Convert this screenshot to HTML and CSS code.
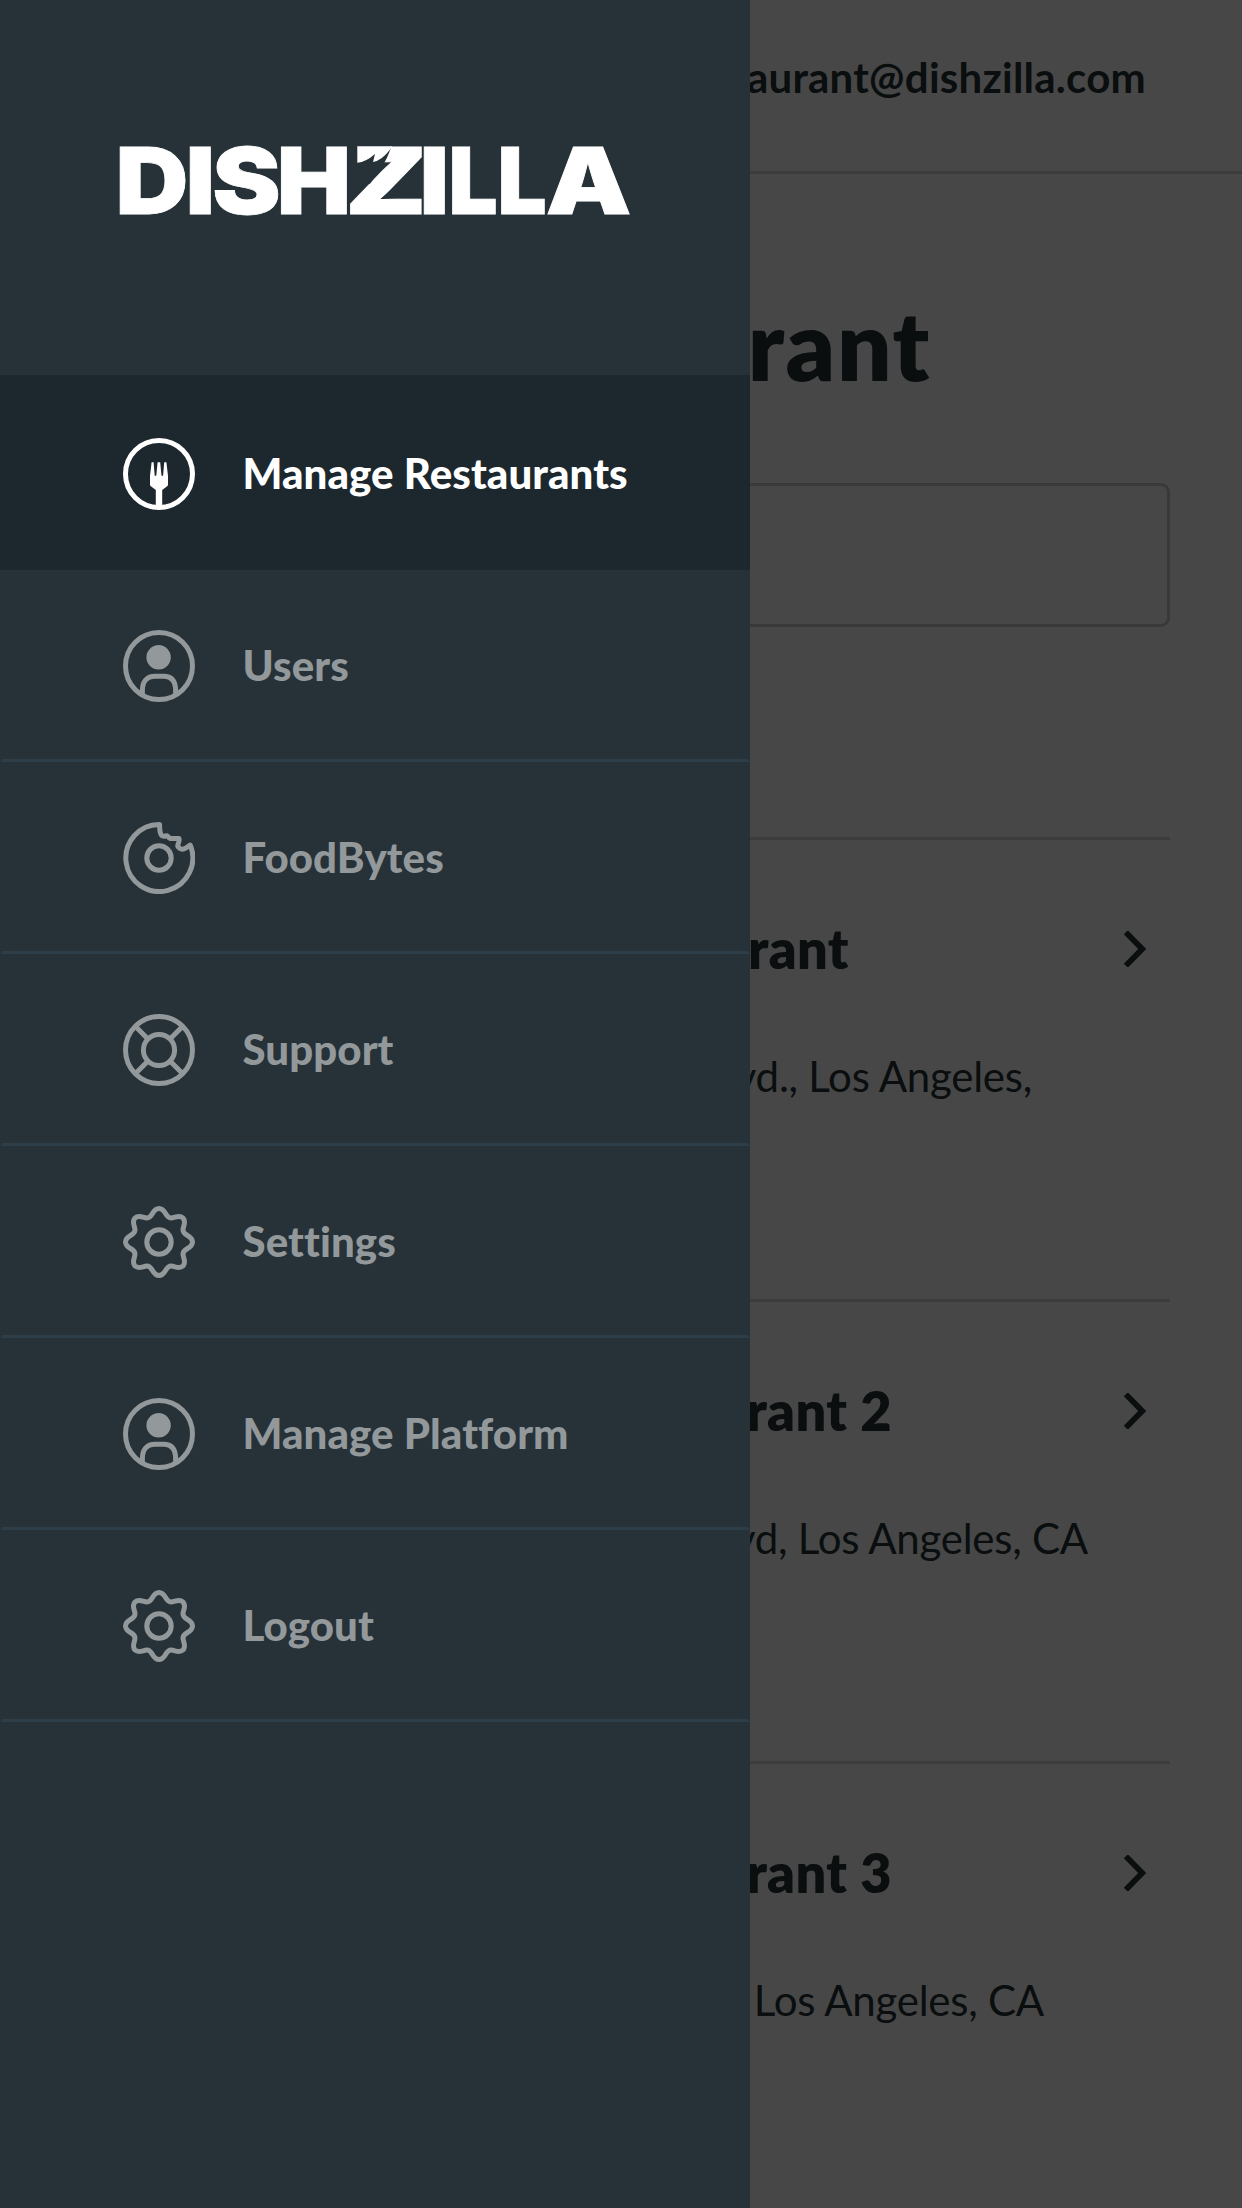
FILE: index.html
```html
<!DOCTYPE html>
<html lang="en">
<head>
<meta charset="utf-8">
<title>Dishzilla</title>
<link rel="stylesheet" href="styles.css">
</head>
<body>
<svg class="sprite" aria-hidden="true">
  <symbol id="user" viewBox="0 0 72 72">
    <circle cx="36" cy="36" r="33.5"/>
    <circle class="solid" cx="35.6" cy="27.3" r="12.2"/>
    <path d="M19.4 65V60.5C19.4 51 24 46.3 32 46.3H40.5C48.5 46.3 52.6 51 52.6 60.5V65"/>
  </symbol>
  <symbol id="gear" viewBox="0 0 72 72">
    <circle cx="36" cy="36" r="12.2"/>
    <path d="M36 2.5C43 2.5 42 12 48 12C52 12 56 8.3 60 12C63.7 16 60 20 60 24C60 30 69.5 29 69.5 36C69.5 43 60 42 60 48C60 52 63.7 56 60 60C56 63.7 52 60 48 60C42 60 43 69.5 36 69.5C29 69.5 30 60 24 60C20 60 16 63.7 12 60C8.3 56 12 52 12 48C12 42 2.5 43 2.5 36C2.5 29 12 30 12 24C12 20 8.3 16 12 12C16 8.3 20 12 24 12C30 12 29 2.5 36 2.5Z"/>
  </symbol>
  <symbol id="chevron" viewBox="0 0 24 36">
    <path d="M1.8 1.3L18.2 18L1.8 34.7"/>
  </symbol>
</svg>

<div class="page">
  <header class="topbar">aurant@dishzilla.com</header>
  <main class="content">
    <h1 class="title">Restaurant</h1>
    <div class="search"></div>
    <ul class="list">
      <li class="card">
        <div class="card-head"><h2 class="card-name first">Restaurant</h2><svg class="chevron"><use href="#chevron"/></svg></div>
        <p class="address a1">Blvd., Los Angeles,</p>
      </li>
      <li class="card">
        <div class="card-head"><h2 class="card-name">Restaurant 2</h2><svg class="chevron"><use href="#chevron"/></svg></div>
        <p class="address a2">Blvd, Los Angeles, CA</p>
      </li>
      <li class="card">
        <div class="card-head"><h2 class="card-name">Restaurant 3</h2><svg class="chevron"><use href="#chevron"/></svg></div>
        <p class="address a3">Los Angeles, CA</p>
      </li>
    </ul>
  </main>
</div>
<div class="overlay"></div>

<aside class="drawer">
  <div class="brand">
    <svg class="logo" viewBox="0 0 512 76">
      <text class="word" y="70.7"><tspan x="-4.6" textLength="73" lengthAdjust="spacingAndGlyphs">D</tspan><tspan x="65.6" textLength="29.6" lengthAdjust="spacingAndGlyphs">I</tspan><tspan x="92.2" textLength="68.5" lengthAdjust="spacingAndGlyphs">S</tspan><tspan x="156.8" textLength="74.3" lengthAdjust="spacingAndGlyphs">H</tspan><tspan x="224.7" textLength="82.3" lengthAdjust="spacingAndGlyphs">Z</tspan><tspan x="299.5" textLength="29.6" lengthAdjust="spacingAndGlyphs">I</tspan><tspan x="328.5" textLength="49.2" lengthAdjust="spacingAndGlyphs">L</tspan><tspan x="377.4" textLength="49.2" lengthAdjust="spacingAndGlyphs">L</tspan><tspan x="425.5" textLength="86.1" lengthAdjust="spacingAndGlyphs">A</tspan></text>
      <!-- ragged bite along the top bar of the wordmark -->
      <path class="bite" d="M229 2H270.3V6.3Q268 14 261.7 24.3L250 40.8H229Z"/>
      <path class="teeth" d="M237.3 3.3V19.7Q246 19 255 11L253 19Q262 17.5 270.3 6.3L272 3.3Z"/>
    </svg>
  </div>
  <nav class="nav">
    <a class="item active"><svg class="icon" viewBox="0 0 72 72"><circle cx="36" cy="36" r="33.5"/><path class="solid" d="M28.6 24.3H30.6L31.7 37.7H33.3L34.6 24.3H37.2L38.5 37.7H40.1L41.2 24.3H43.4L45 38V46.5Q45 47.8 43.8 48.5L39.2 52V70H32.8V52L28.2 48.5Q27 47.8 27 46.5V38Z"/></svg><span class="label">Manage Restaurants</span></a>
    <a class="item"><svg class="icon"><use href="#user"/></svg><span class="label">Users</span></a>
    <a class="item"><svg class="icon" viewBox="0 0 72 72"><circle cx="36" cy="36" r="12.2"/><path d="M36.6 2.5A33.5 33.5 0 1 0 67.2 23L62.5 26.2Q60 27.8 57.5 26.8Q54 25 55 22.5Q56.5 19 56 16.6L47.5 16.5Q45.8 16 45.5 15Q43.5 12.8 42 14.2Q39.5 14.8 38.2 12.8Q36.6 10.5 36.6 2.5Z"/></svg><span class="label">FoodBytes</span></a>
    <a class="item"><svg class="icon" viewBox="0 0 72 72"><circle cx="36" cy="36" r="33.5"/><circle cx="36" cy="36" r="15.6"/><path d="M12.5 12.5L25 25M59.5 12.5L47 25M12.5 59.5L25 47M59.5 59.5L47 47"/></svg><span class="label">Support</span></a>
    <a class="item"><svg class="icon"><use href="#gear"/></svg><span class="label">Settings</span></a>
    <a class="item"><svg class="icon"><use href="#user"/></svg><span class="label">Manage Platform</span></a>
    <a class="item"><svg class="icon"><use href="#gear"/></svg><span class="label">Logout</span></a>
  </nav>
</aside>
</body>
</html>
```
FILE: styles.css
```css
* { box-sizing: border-box; }
body { margin: 0; height: 2208px; overflow: hidden; position: relative; background: #fff; color: #263238; font: 400 42px/63px Lato, sans-serif; font-variant-ligatures: none; }
h1, h2, p, ul { margin: 0; padding: 0; }
.sprite { display: none; }
.topbar { height: 174px; padding: 46px 96px 0 0; border-bottom: 3px solid #d8d8d8; text-align: right; font-weight: 700; letter-spacing: .25px; }
.content { padding: 116px 72px 0; }
.title { width: 859px; height: 112px; font-size: 96px; line-height: 108px; font-weight: 800; letter-spacing: 1.6px; text-align: right; }
.search { margin-top: 81px; height: 144px; border: 3px solid #cecece; border-radius: 9px; }
.list { list-style: none; margin-top: 210px; }
.card { height: 462px; border-top: 3px solid #d8d8d8; padding-top: 71px; }
.card-head { display: flex; justify-content: space-between; align-items: center; height: 75px; padding-right: 22px; }
.card-name { width: 820px; font-size: 54px; line-height: 75px; font-weight: 800; letter-spacing: .4px; text-align: right; }
.card-name.first { width: 777px; }
.chevron { width: 24px; height: 36px; fill: none; stroke: currentColor; stroke-width: 5.8; }
.address { padding-top: 59px; text-align: right; letter-spacing: -.25px; }
.a1 { width: 960px; }
.a2 { width: 1016px; }
.a3 { width: 972px; }
.overlay { position: absolute; inset: 0; background: rgba(0, 0, 0, .72); }
.drawer { position: absolute; left: 0; top: 0; width: 750px; height: 2208px; background: #263238; }
.brand { height: 378px; padding: 143px 0 0 120px; }
.logo { display: block; width: 512px; height: 76px; overflow: visible; }
.word { font: 900 92.6px Inter, sans-serif; fill: #fff; stroke: #fff; stroke-width: .8; }
.bite { fill: #263238; }
.teeth { fill: #fff; }
.item { display: flex; align-items: center; gap: 47.5px; height: 192px; padding-left: 120px; border: 3px solid transparent; border-bottom-color: #2d3e48; font-weight: 900; letter-spacing: .08px; color: #93989b; }
.active { height: 195px; margin-top: -3px; padding-top: 3px; background: #1d282e; border-bottom-color: transparent; color: #fff; }
.label { padding-bottom: 2px; }
.icon { width: 72px; height: 72px; fill: none; stroke: currentColor; stroke-width: 5; stroke-linejoin: round; }
.solid { fill: currentColor; stroke: none; }
```
